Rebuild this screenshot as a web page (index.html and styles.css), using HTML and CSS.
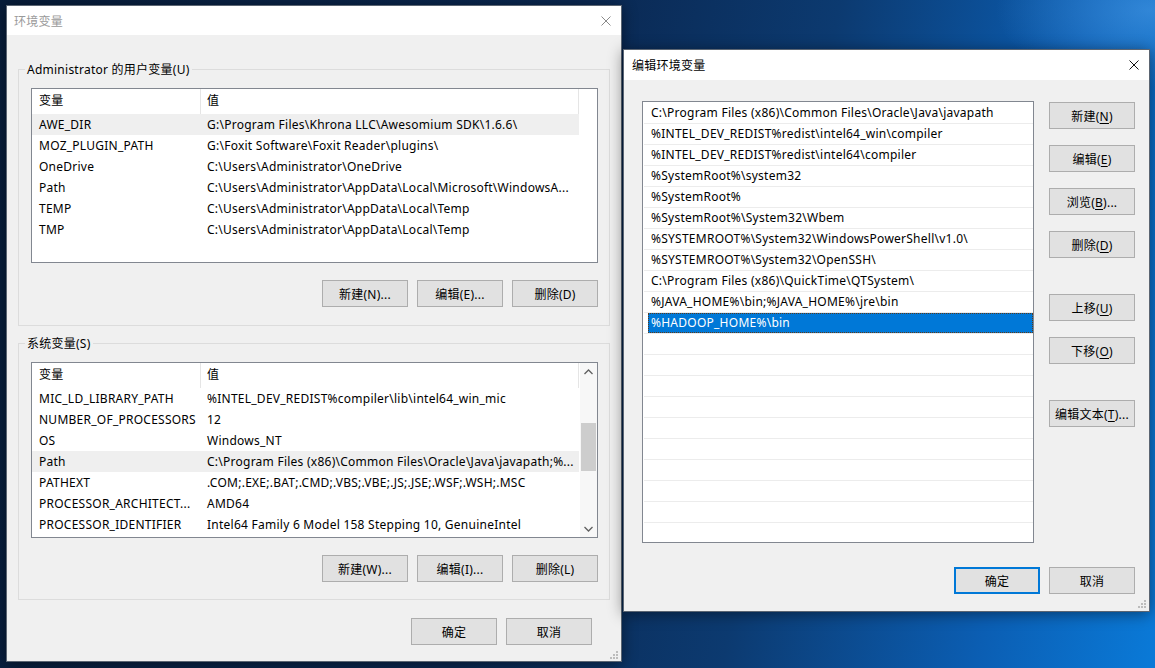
FILE: index.html
```html
<!DOCTYPE html>
<html lang="zh-CN">
<head>
    <meta charset="UTF-8">
    <title>环境变量</title>
    <link rel="stylesheet" href="styles.css">
</head>
<body>
<div class="desktop">

    <!-- 环境变量 (inactive) -->
    <section class="window env-window">
        <div class="titlebar">
            <span class="title">环境变量</span>
            <span class="close"><svg width="10" height="10" viewBox="0 0 10 10"><path d="M0.5 0.5L9.5 9.5M9.5 0.5L0.5 9.5"/></svg></span>
        </div>
        <div class="env-body">
            <fieldset class="group">
                <legend>Administrator 的用户变量(U)</legend>
                <div class="listview user-list">
                    <div class="lv-table">
                        <div class="lv-head"><div class="lv-name">变量</div><div class="lv-value">值</div></div>
                        <div class="lv-row selected"><div class="lv-name">AWE_DIR</div><div class="lv-value">G:\Program Files\Khrona LLC\Awesomium SDK\1.6.6\</div></div>
                        <div class="lv-row"><div class="lv-name">MOZ_PLUGIN_PATH</div><div class="lv-value">G:\Foxit Software\Foxit Reader\plugins\</div></div>
                        <div class="lv-row"><div class="lv-name">OneDrive</div><div class="lv-value">C:\Users\Administrator\OneDrive</div></div>
                        <div class="lv-row"><div class="lv-name">Path</div><div class="lv-value">C:\Users\Administrator\AppData\Local\Microsoft\WindowsA...</div></div>
                        <div class="lv-row"><div class="lv-name">TEMP</div><div class="lv-value">C:\Users\Administrator\AppData\Local\Temp</div></div>
                        <div class="lv-row"><div class="lv-name">TMP</div><div class="lv-value">C:\Users\Administrator\AppData\Local\Temp</div></div>
                    </div>
                </div>
                <div class="btn-row">
                    <button class="btn">新建(N)...</button>
                    <button class="btn">编辑(E)...</button>
                    <button class="btn">删除(D)</button>
                </div>
            </fieldset>

            <fieldset class="group group-system">
                <legend>系统变量(S)</legend>
                <div class="listview system-list">
                    <div class="lv-table">
                        <div class="lv-head"><div class="lv-name">变量</div><div class="lv-value">值</div></div>
                        <div class="lv-row"><div class="lv-name">MIC_LD_LIBRARY_PATH</div><div class="lv-value">%INTEL_DEV_REDIST%compiler\lib\intel64_win_mic</div></div>
                        <div class="lv-row"><div class="lv-name">NUMBER_OF_PROCESSORS</div><div class="lv-value">12</div></div>
                        <div class="lv-row"><div class="lv-name">OS</div><div class="lv-value">Windows_NT</div></div>
                        <div class="lv-row selected"><div class="lv-name">Path</div><div class="lv-value">C:\Program Files (x86)\Common Files\Oracle\Java\javapath;%...</div></div>
                        <div class="lv-row"><div class="lv-name">PATHEXT</div><div class="lv-value">.COM;.EXE;.BAT;.CMD;.VBS;.VBE;.JS;.JSE;.WSF;.WSH;.MSC</div></div>
                        <div class="lv-row"><div class="lv-name">PROCESSOR_ARCHITECT...</div><div class="lv-value">AMD64</div></div>
                        <div class="lv-row"><div class="lv-name">PROCESSOR_IDENTIFIER</div><div class="lv-value">Intel64 Family 6 Model 158 Stepping 10, GenuineIntel</div></div>
                    </div>
                    <div class="scrollbar">
                        <div class="sb-arrow"><svg width="9" height="6" viewBox="0 0 9 6"><path d="M0.5 5L4.5 1L8.5 5"/></svg></div>
                        <div class="sb-track"><div class="sb-thumb"></div></div>
                        <div class="sb-arrow"><svg width="9" height="6" viewBox="0 0 9 6"><path d="M0.5 1L4.5 5L8.5 1"/></svg></div>
                    </div>
                </div>
                <div class="btn-row">
                    <button class="btn">新建(W)...</button>
                    <button class="btn">编辑(I)...</button>
                    <button class="btn">删除(L)</button>
                </div>
            </fieldset>

            <div class="dialog-buttons">
                <button class="btn">确定</button>
                <button class="btn">取消</button>
            </div>
        </div>
        <svg class="grip" width="8" height="8" viewBox="0 0 8 8"><rect x="6" y="0" width="2" height="2"/><rect x="3" y="3" width="2" height="2"/><rect x="6" y="3" width="2" height="2"/><rect x="0" y="6" width="2" height="2"/><rect x="3" y="6" width="2" height="2"/><rect x="6" y="6" width="2" height="2"/></svg>
    </section>

    <!-- 编辑环境变量 (active) -->
    <section class="window edit-window">
        <div class="titlebar active">
            <span class="title">编辑环境变量</span>
            <span class="close"><svg width="10" height="10" viewBox="0 0 10 10"><path d="M0.5 0.5L9.5 9.5M9.5 0.5L0.5 9.5"/></svg></span>
        </div>
        <div class="edit-body">
            <div class="edit-main">
                <div class="path-list">
                    <div class="path-row"><span class="path-text">C:\Program Files (x86)\Common Files\Oracle\Java\javapath</span></div>
                    <div class="path-row"><span class="path-text">%INTEL_DEV_REDIST%redist\intel64_win\compiler</span></div>
                    <div class="path-row"><span class="path-text">%INTEL_DEV_REDIST%redist\intel64\compiler</span></div>
                    <div class="path-row"><span class="path-text">%SystemRoot%\system32</span></div>
                    <div class="path-row"><span class="path-text">%SystemRoot%</span></div>
                    <div class="path-row"><span class="path-text">%SystemRoot%\System32\Wbem</span></div>
                    <div class="path-row"><span class="path-text">%SYSTEMROOT%\System32\WindowsPowerShell\v1.0\</span></div>
                    <div class="path-row"><span class="path-text">%SYSTEMROOT%\System32\OpenSSH\</span></div>
                    <div class="path-row"><span class="path-text">C:\Program Files (x86)\QuickTime\QTSystem\</span></div>
                    <div class="path-row"><span class="path-text">%JAVA_HOME%\bin;%JAVA_HOME%\jre\bin</span></div>
                    <div class="path-row selected"><span class="path-text">%HADOOP_HOME%\bin</span></div>
                    <div class="path-row"></div>
                    <div class="path-row"></div>
                    <div class="path-row"></div>
                    <div class="path-row"></div>
                    <div class="path-row"></div>
                    <div class="path-row"></div>
                    <div class="path-row"></div>
                    <div class="path-row"></div>
                    <div class="path-row"></div>
                    <div class="path-row"></div>
                    <div class="path-row"></div>
                </div>
                <div class="side-buttons">
                    <button class="btn">新建(<u>N</u>)</button>
                    <button class="btn">编辑(<u>E</u>)</button>
                    <button class="btn">浏览(<u>B</u>)...</button>
                    <button class="btn">删除(<u>D</u>)</button>
                    <button class="btn spaced">上移(<u>U</u>)</button>
                    <button class="btn">下移(<u>O</u>)</button>
                    <button class="btn spaced">编辑文本(<u>T</u>)...</button>
                </div>
            </div>
            <div class="edit-footer">
                <button class="btn default">确定</button>
                <button class="btn">取消</button>
            </div>
        </div>
        <svg class="grip" width="8" height="8" viewBox="0 0 8 8"><rect x="6" y="0" width="2" height="2"/><rect x="3" y="3" width="2" height="2"/><rect x="6" y="3" width="2" height="2"/><rect x="0" y="6" width="2" height="2"/><rect x="3" y="6" width="2" height="2"/><rect x="6" y="6" width="2" height="2"/></svg>
    </section>

</div>
</body>
</html>
```

FILE: styles.css
```css
* {
    margin: 0;
    padding: 0;
    box-sizing: border-box;
}

html, body {
    width: 1155px;
    height: 668px;
    overflow: hidden;
}

body {
    font-family: "Noto Sans", "Noto Sans CJK SC", sans-serif;
    font-size: 12px;
    letter-spacing: 0.25px;
    color: #000;
}

/* desktop wallpaper */
.desktop {
    position: relative;
    width: 1155px;
    height: 668px;
    background:
        radial-gradient(ellipse 220px 110px at 1150px 10px, rgba(80, 160, 235, 0.55), transparent 70%),
        linear-gradient(100deg, #081d3a 0%, #0a2750 45%, #0c3a70 66%, #0b5eb3 86%, #0a7ad8 100%);
}

.window {
    position: absolute;
    display: flex;
    flex-direction: column;
    background-color: #f0f0f0;
    border: 1px solid #5b6572;
    box-shadow: 0 2px 14px rgba(0, 0, 0, 0.45);
}

.env-window {
    left: 6px;
    top: 5px;
    width: 616px;
    height: 657px;
}

.edit-window {
    left: 623px;
    top: 49px;
    width: 527px;
    height: 563px;
}

.titlebar {
    display: flex;
    align-items: center;
    justify-content: space-between;
    height: 29px;
    padding-left: 7px;
    background-color: #ffffff;
    color: #9a9a9a;
}

.titlebar.active {
    height: 30px;
    padding-left: 8px;
    color: #000;
}

.close {
    display: flex;
    align-items: center;
    justify-content: center;
    width: 30px;
    height: 100%;
}

.close path {
    stroke: #8a8a8a;
    stroke-width: 1;
    fill: none;
}

.titlebar.active .close path {
    stroke: #111;
}

.grip {
    position: absolute;
    right: 3px;
    bottom: 2px;
    fill: #bcbcbc;
}

.edit-window .grip {
    bottom: 3px;
}

/* buttons */
.btn {
    width: 86px;
    height: 27px;
    font-family: inherit;
    font-size: 12px;
    letter-spacing: inherit;
    color: #000;
    background-color: #e1e1e1;
    border: 1px solid #adadad;
}

.btn u {
    text-underline-offset: 2px;
}

.btn.default {
    border: 2px solid #0078d7;
}

/* 环境变量 */
.env-body {
    padding: 26px 11px 0 11px;
}

.group {
    border: 1px solid #dcdcdc;
    padding: 10px 11px 18px 12px;
    min-width: 0;
}

.group-system {
    margin-top: 9px;
    padding-bottom: 17px;
}

.group legend {
    line-height: 17px;
    padding: 0 2px;
    margin-left: -6px;
}

.listview {
    display: flex;
    height: 175px;
    background-color: #ffffff;
    border: 1px solid #828790;
    overflow: hidden;
}

.system-list {
    height: 176px;
}

.lv-table {
    width: 547px;
    flex-shrink: 0;
}

.lv-head {
    display: flex;
    height: 25px;
    line-height: 24px;
    border-right: 1px solid #e5e5e5;
}

.lv-head .lv-name {
    border-right: 1px solid #e5e5e5;
}

.lv-row {
    display: flex;
    height: 21px;
    line-height: 21px;
    white-space: nowrap;
}

.lv-row.selected {
    background-color: #efefef;
}

.lv-name {
    width: 169px;
    flex-shrink: 0;
    padding-left: 7px;
    overflow: hidden;
}

.lv-value {
    flex: 1;
    padding-left: 6px;
    overflow: hidden;
    white-space: nowrap;
}

.scrollbar {
    display: flex;
    flex-direction: column;
    width: 17px;
    margin-left: auto;
    background-color: #f7f7f7;
}

.sb-arrow {
    display: flex;
    align-items: center;
    justify-content: center;
    height: 17px;
}

.sb-arrow path {
    stroke: #606060;
    stroke-width: 1.3;
    fill: none;
}

.sb-track {
    flex: 1;
    padding: 0 1px;
}

.sb-thumb {
    margin-top: 43px;
    height: 48px;
    background-color: #cdcdcd;
}

.btn-row {
    display: flex;
    justify-content: flex-end;
    gap: 9px;
    margin-top: 17px;
}

.dialog-buttons {
    display: flex;
    justify-content: flex-end;
    gap: 9px;
    margin-top: 18px;
    padding-right: 18px;
}

/* 编辑环境变量 */
.edit-body {
    padding: 21px 14px 0 18px;
}

.edit-main {
    display: flex;
    align-items: flex-start;
}

.path-list {
    width: 392px;
    height: 442px;
    padding-top: 1px;
    background-color: #ffffff;
    border: 1px solid #828790;
    overflow: hidden;
}

.path-row {
    height: 21px;
    margin-left: 1px;
    border-bottom: 1px solid #ececec;
    white-space: nowrap;
}

.path-text {
    display: block;
    height: 20px;
    line-height: 20px;
    padding-left: 7px;
}

.path-row.selected .path-text {
    margin-left: 4px;
    padding-left: 2px;
    line-height: 18px;
    color: #ffffff;
    background-color: #0078d7;
    border: 1px dotted #5c3a1a;
}

.side-buttons {
    display: flex;
    flex-direction: column;
    margin-left: 15px;
    padding-top: 1px;
}

.side-buttons .btn + .btn {
    margin-top: 16px;
}

.side-buttons .btn.spaced {
    margin-top: 36px;
}

.edit-footer {
    display: flex;
    justify-content: flex-end;
    gap: 9px;
    margin-top: 24px;
}
```
